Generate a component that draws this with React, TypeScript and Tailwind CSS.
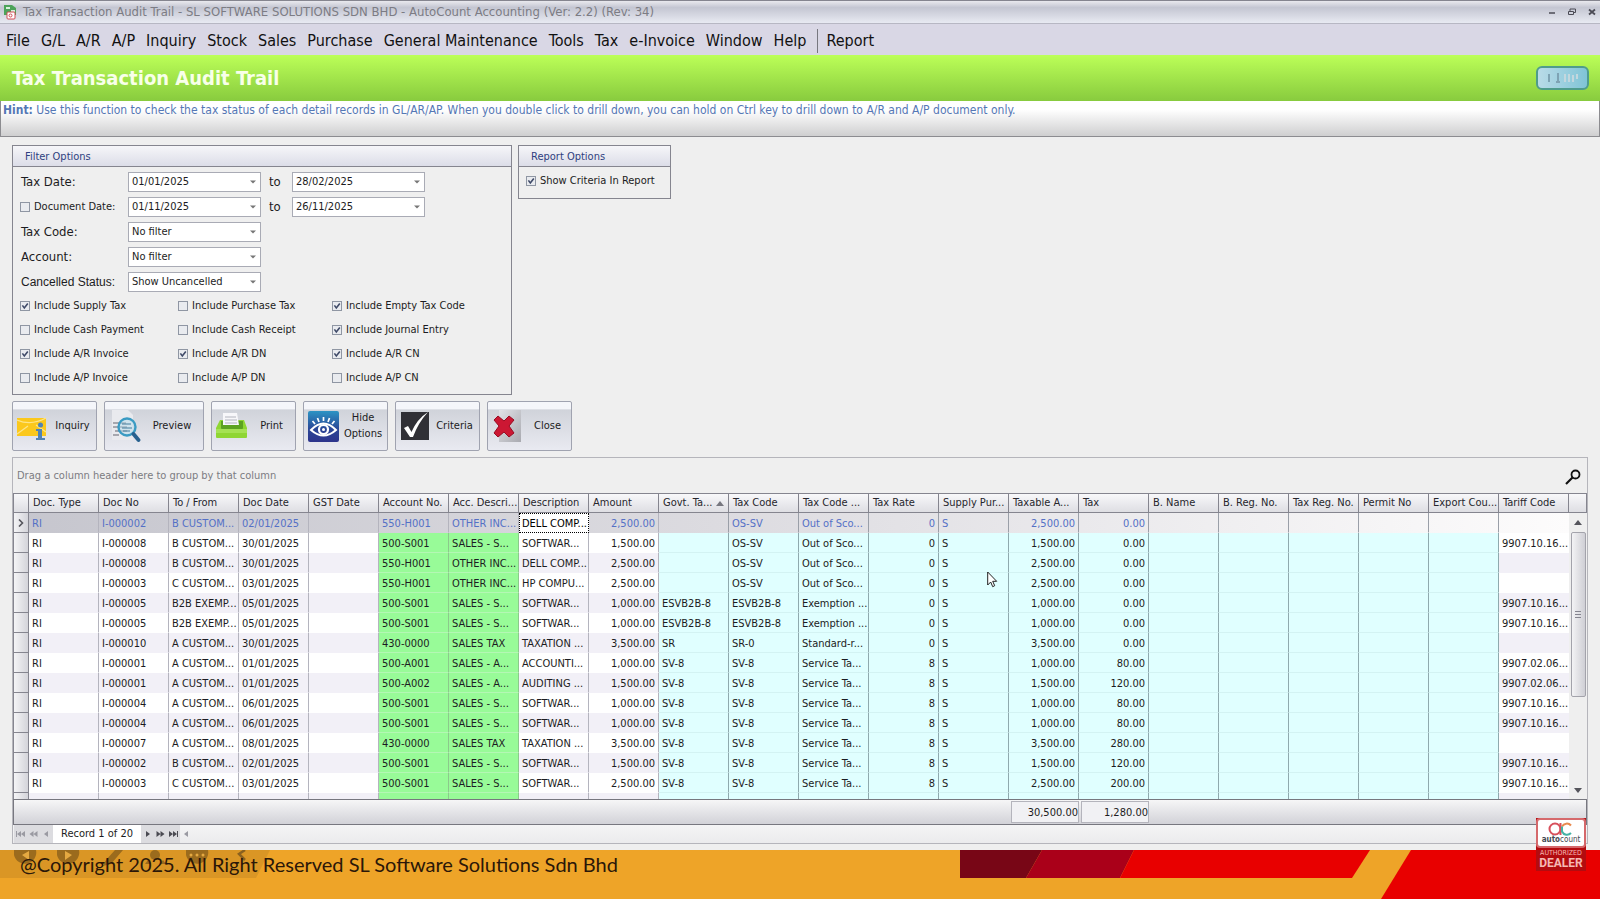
import { FC, ReactNode } from "react";

const menus = ["File", "G/L", "A/R", "A/P", "Inquiry", "Stock", "Sales", "Purchase", "General Maintenance", "Tools", "Tax", "e-Invoice", "Window", "Help"];

const includes: [string, boolean][] = [
    ["Include Supply Tax", true], ["Include Purchase Tax", false], ["Include Empty Tax Code", true],
    ["Include Cash Payment", false], ["Include Cash Receipt", false], ["Include Journal Entry", true],
    ["Include A/R Invoice", true], ["Include A/R DN", true], ["Include A/R CN", true],
    ["Include A/P Invoice", false], ["Include A/P DN", false], ["Include A/P CN", false],
];

const columns = [
    "Doc. Type", "Doc No", "To / From", "Doc Date", "GST Date", "Account No.", "Acc. Descri...", "Description",
    "Amount", "Govt. Ta...", "Tax Code", "Tax Code ...", "Tax Rate", "Supply Pur...", "Taxable A...", "Tax",
    "B. Name", "B. Reg. No.", "Tax Reg. No.", "Permit No", "Export Cou...", "Tariff Code",
];

// doc no, customer, date, account, acc. description, description, amount, govt. tax, tax code, tax code desc., rate, tax, tariff
const records = [
    ["I-000002", "B CUSTOM...", "02/01/2025", "550-H001", "OTHER INC...", "DELL COMP...", "2,500.00", "", "OS-SV", "Out of Sco...", "0", "0.00", ""],
    ["I-000008", "B CUSTOM...", "30/01/2025", "500-S001", "SALES - S...", "SOFTWAR...", "1,500.00", "", "OS-SV", "Out of Sco...", "0", "0.00", "9907.10.16..."],
    ["I-000008", "B CUSTOM...", "30/01/2025", "550-H001", "OTHER INC...", "DELL COMP...", "2,500.00", "", "OS-SV", "Out of Sco...", "0", "0.00", ""],
    ["I-000003", "C CUSTOM...", "03/01/2025", "550-H001", "OTHER INC...", "HP COMPU...", "2,500.00", "", "OS-SV", "Out of Sco...", "0", "0.00", ""],
    ["I-000005", "B2B EXEMP...", "05/01/2025", "500-S001", "SALES - S...", "SOFTWAR...", "1,000.00", "ESVB2B-8", "ESVB2B-8", "Exemption ...", "0", "0.00", "9907.10.16..."],
    ["I-000005", "B2B EXEMP...", "05/01/2025", "500-S001", "SALES - S...", "SOFTWAR...", "1,000.00", "ESVB2B-8", "ESVB2B-8", "Exemption ...", "0", "0.00", "9907.10.16..."],
    ["I-000010", "A CUSTOM...", "30/01/2025", "430-0000", "SALES TAX", "TAXATION ...", "3,500.00", "SR", "SR-0", "Standard-r...", "0", "0.00", ""],
    ["I-000001", "A CUSTOM...", "01/01/2025", "500-A001", "SALES - A...", "ACCOUNTI...", "1,000.00", "SV-8", "SV-8", "Service Ta...", "8", "80.00", "9907.02.06..."],
    ["I-000001", "A CUSTOM...", "01/01/2025", "500-A002", "SALES - A...", "AUDITING ...", "1,500.00", "SV-8", "SV-8", "Service Ta...", "8", "120.00", "9907.02.06..."],
    ["I-000004", "A CUSTOM...", "06/01/2025", "500-S001", "SALES - S...", "SOFTWAR...", "1,000.00", "SV-8", "SV-8", "Service Ta...", "8", "80.00", "9907.10.16..."],
    ["I-000004", "A CUSTOM...", "06/01/2025", "500-S001", "SALES - S...", "SOFTWAR...", "1,000.00", "SV-8", "SV-8", "Service Ta...", "8", "80.00", "9907.10.16..."],
    ["I-000007", "A CUSTOM...", "08/01/2025", "430-0000", "SALES TAX", "TAXATION ...", "3,500.00", "SV-8", "SV-8", "Service Ta...", "8", "280.00", ""],
    ["I-000002", "B CUSTOM...", "02/01/2025", "500-S001", "SALES - S...", "SOFTWAR...", "1,500.00", "SV-8", "SV-8", "Service Ta...", "8", "120.00", "9907.10.16..."],
    ["I-000003", "C CUSTOM...", "03/01/2025", "500-S001", "SALES - S...", "SOFTWAR...", "2,500.00", "SV-8", "SV-8", "Service Ta...", "8", "200.00", "9907.10.16..."],
];

const toCells = (r: string[]) => [
    "RI", r[0], r[1], r[2], "", r[3], r[4], r[5], r[6], r[7], r[8], r[9], r[10], "S", r[6], r[11], "", "", "", "", "", r[12],
];

const isNumber = (c: number) => c === 8 || c === 12 || c === 14 || c === 15;

const Columns: FC = () => (
    <colgroup>
        <col className="w-[15px]" />
        {columns.map((c) => <col key={c} />)}
    </colgroup>
);

const Check: FC<{ label: string; checked?: boolean }> = ({ label, checked }) => (
    <label className="flex h-6 items-center gap-1 whitespace-nowrap">
        <span className="grid shrink-0">
            <input type="checkbox" defaultChecked={checked} className="peer col-start-1 row-start-1 size-[10px] appearance-none border border-[#8f96a3] bg-[#e9ebef]" />
            <svg viewBox="0 0 10 10" className="pointer-events-none invisible col-start-1 row-start-1 size-[10px] peer-checked:visible" fill="none" stroke="#3f4a68" strokeWidth="1.6">
                <path d="M2.4 4.4 4.3 7 7.8 2.4" />
            </svg>
        </span>
        {label}
    </label>
);

const Arrow: FC = () => <svg viewBox="0 0 6 4" className="h-1 w-1.5" fill="#777"><path d="M0 .5h6L3 3.5z" /></svg>;

const DateBox: FC<{ label: string; value: string }> = ({ label, value }) => (
    <div className="flex h-5 w-[133px] items-center border border-[#a9abb5] bg-white pl-[3px]">
        <input aria-label={label} defaultValue={value} className="min-w-0 flex-1 outline-none" />
        <button aria-label={label + " list"} className="px-1"><Arrow /></button>
    </div>
);

const Combo: FC<{ id: string; value: string }> = ({ id, value }) => (
    <div className="grid h-5 w-[133px] items-center border border-[#a9abb5] bg-white">
        <select id={id} className="col-start-1 row-start-1 appearance-none pl-[3px] outline-none">
            <option>{value}</option>
        </select>
        <span className="pointer-events-none col-start-1 row-start-1 justify-self-end px-1"><Arrow /></span>
    </div>
);

const Group: FC<{ title: string; className: string; children: ReactNode }> = ({ title, className, children }) => (
    <section className={"border border-[#85858f] " + className}>
        <h2 className="h-[21px] border-b border-[#85858f] bg-linear-to-b from-[#f6f6f9] to-[#dcdde8] pl-3 leading-[22px] text-[#2f3f80]">{title}</h2>
        {children}
    </section>
);

const ToolButton: FC<{ label: string; wide?: boolean; children: ReactNode }> = ({ label, wide, children }) => (
    <button className={(wide ? "w-[100px]" : "w-[85px]") + " flex h-[50px] items-center rounded-xs border border-[#a0a3b0] bg-linear-to-b from-[#f5f6fa] from-15% via-[#d0d3da] via-16% to-[#e9eaf1] pl-1"}>
        {children}
        <span className="flex-1 text-center leading-4">{label}</span>
    </button>
);

const InquiryIcon: FC = () => (
    <svg viewBox="0 0 32 32" className="size-8">
        <path d="M0 8h29v18H0z" fill="#fbc81c" />
        <path d="M0 10q14 6 29-2M0 24l11-8M29 22l-10-7" stroke="#fde58a" strokeWidth="1.3" fill="none" />
        <circle cx="23.500" cy="15" r="2.500" fill="#4f83b5" />
        <path d="M19 19h6v9h3v2h-9v-2h2v-7h-2z" fill="#4f83b5" />
    </svg>
);

const PreviewIcon: FC = () => (
    <svg viewBox="0 0 32 36" className="h-9 w-8">
        <path d="M3 2h16l5 5v25H3z" fill="#e9eaee" />
        <path d="M4 15h13M4 19h14M6 23h12M4 27h6" stroke="#65656f" strokeWidth="1.200" />
        <circle cx="18" cy="19" r="8.500" fill="#b6dcec" fillOpacity=".5" stroke="#3a9bc3" strokeWidth="2.400" />
        <path d="M13 16h9M13 20h10M14 23h7" stroke="#447c9b" strokeWidth="1.200" />
        <path d="M24.500 26l5 6" stroke="#28618f" strokeWidth="3.800" strokeLinecap="round" />
    </svg>
);

const PrintIcon: FC = () => (
    <svg viewBox="0 0 32 32" className="size-8">
        <path d="M4 10h24l3 8v9q0 1-1 1H1q-1 0-1-1v-9z" fill="#8fd634" />
        <path d="M5 11h22v7q0 1-1 1H6q-1 0-1-1z" fill="#5da321" />
        <path d="M7 3h14l2 12H7z" fill="#f7f7fa" />
        <path d="M9 7h11M9 10h12M9 13h12" stroke="#b3b5be" />
        <path d="M0 19h31v4H0z" fill="#a5e254" />
    </svg>
);

const EyeIcon: FC = () => (
    <svg viewBox="0 0 31 31" className="size-[31px]">
        <defs>
            <linearGradient id="eye" x1="0" y1="0" x2="0" y2="1">
                <stop offset="0" stopColor="#2c94c4" />
                <stop offset=".6" stopColor="#2a4596" />
                <stop offset="1" stopColor="#2d348c" />
            </linearGradient>
        </defs>
        <rect width="31" height="31" rx="2" fill="url(#eye)" />
        <path d="M3 19q12.500-13 25 0q-12.500 11-25 0z" fill="none" stroke="#fff" strokeWidth="2" />
        <circle cx="15.500" cy="18.500" r="4.500" fill="none" stroke="#fff" strokeWidth="2.200" />
        <circle cx="15.500" cy="18.500" r="1.500" fill="#fff" />
        <path d="M15.500 6v4M9.500 7l1.500 4M21.500 7L20 11M4.500 10l2.500 3M26.500 10L24 13" stroke="#fff" strokeWidth="1.700" />
    </svg>
);

const CriteriaIcon: FC = () => (
    <svg viewBox="0 0 30 30" className="size-[30px]">
        <path d="M1 1h28v28H1z" fill="#303036" />
        <path d="M4 17l4-2 3.500 6Q17 8 28 1 18 12 13 26h-3z" fill="#fff" />
    </svg>
);

const CloseIcon: FC = () => (
    <svg viewBox="0 0 32 34" className="h-[34px] w-8">
        <defs>
            <linearGradient id="page" x1="0" y1="0" x2="1" y2="1">
                <stop offset="0" stopColor="#e2e3e8" />
                <stop offset="1" stopColor="#a9aab0" />
            </linearGradient>
        </defs>
        <path d="M7 1h22v32H7z" fill="url(#page)" />
        <path d="M2 11l4-4 6 5 5-5 5 4-5 6 5 7-5 4-5-5-6 5-4-4 5-7z" fill="#cc1733" stroke="#980c22" />
    </svg>
);

// record navigator glyphs
const Nav: FC<{ label: string; d: string; on?: boolean }> = ({ label, d, on }) => (
    <button aria-label={label} className="flex w-[13px] items-center justify-center">
        <svg viewBox="0 0 9 6" className={on ? "h-1.5 w-[9px] fill-[#4a4a52]" : "h-1.5 w-[9px] fill-[#9a9aa2]"}><path d={d} /></svg>
    </button>
);

const Grid: FC = () => (
    <table className="w-full table-fixed border-separate border-spacing-0 leading-4 whitespace-nowrap">
        <Columns />
        <thead>
            <tr className="h-5">
                <th aria-label="Row" className="border-y border-r border-[#85858f] bg-linear-to-b from-[#f8f8fa] to-[#dedee3]" />
                {columns.map((c, i) => (
                    <th key={c} className="border-y border-r border-[#85858f] bg-linear-to-b from-[#f8f8fa] to-[#dedee3] p-0 pl-1 text-left font-normal text-[#26262c]">
                        {i === 9 ? (
                            <span className="flex items-center justify-between pr-1">{c}
                                <svg viewBox="0 0 8 5" className="h-[5px] w-2" fill="#77777f"><path d="M0 5h8L4 0z" /></svg>
                            </span>
                        ) : c}
                    </th>
                ))}
            </tr>
        </thead>
        <tbody>
            {[...records, null].map((r, n) => (
                <tr key={n} className={n === 0 ? "h-5 bg-linear-to-r from-[#c6c6ce] via-[#dcdbe0] via-45% to-[#fdfcfc] text-[#5470c6]" : n % 2 ? "h-5 bg-white" : "h-5 bg-[#f2f0f7]"}>
                    <td className="border-r border-b border-[#85858f] bg-linear-to-r from-[#f4f4f6] to-[#d4d4da] p-0">
                        {n === 0 && (
                            <svg viewBox="0 0 6 8" className="mx-auto h-2 w-1.5" fill="none" stroke="#55555c" strokeWidth="1.600"><path d="M1 .5 4.500 4 1 7.500" /></svg>
                        )}
                    </td>
                    {(r ? toCells(r) : columns.map(() => "")).map((text, c) => {
                        let look = "border-r-[#b4b4be] border-b-transparent";
                        if (n > 0 && (c === 5 || c === 6)) look = "border-r-[#8cc98c] border-b-[#b4f7b4] bg-[#98fb98]";
                        if (c > 8 && c < 21) look = n > 0 ? "border-r-[#8fa9ae] border-b-[#d3f3f3] bg-[#e0ffff]" : "border-r-[#9a9fa8] border-b-transparent";
                        if (n === 0 && c === 7) look = "bg-white text-black outline-1 -outline-offset-1 outline-dotted outline-black border-transparent";
                        if (c === 21) look = "border-transparent";
                        return (
                            <td key={c} className={"border-r border-b p-0 pt-0.5 " + (isNumber(c) ? "pr-[3px] text-right " : "pl-[3px] ") + look}>{text}</td>
                        );
                    })}
                </tr>
            ))}
        </tbody>
    </table>
);

export default function App() {
    return (
        <div className="flex h-screen flex-col overflow-hidden bg-[#efefef] font-['DejaVu_Sans_Condensed','DejaVu_Sans',sans-serif] text-[11px] text-[#1c1c22]">
            <header className="flex h-6 shrink-0 items-center border-t border-b border-t-[#85858f] border-b-[#b7b7c3] bg-linear-to-b from-[#e9e9ee] via-[#c4c6d2] via-30% to-[#e8eaf2] pr-1 pl-[3px]">
                <svg viewBox="0 0 14 16" className="mr-1.5 h-4 w-3.5">
                    <path d="M1 1h8l4 3v7H1z" fill="#4da35a" />
                    <path d="M3 3h4v2H3zM8 6h4v2H8z" fill="#d9f0dc" />
                    <rect x="4" y="8" width="8" height="7" rx="1" fill="#fff" stroke="#d24a55" />
                    <circle cx="7.500" cy="11.500" r="1.500" fill="none" stroke="#d24a55" />
                </svg>
                <span className="flex-1 text-[13px] text-[#7c7c84]">Tax Transaction Audit Trail - SL SOFTWARE SOLUTIONS SDN BHD - AutoCount Accounting (Ver: 2.2) (Rev: 34)</span>
                <div className="flex gap-3">
                    <button aria-label="Minimize"><svg viewBox="0 0 8 8" className="size-2" stroke="#4b4b55" strokeWidth="1.500"><path d="M1 5h6" /></svg></button>
                    <button aria-label="Restore"><svg viewBox="0 0 8 8" className="size-2" fill="none" stroke="#4b4b55"><path d="M.5 3.500h5v3h-5zM2 3V1h5.500v3.500H6" /></svg></button>
                    <button aria-label="Close window"><svg viewBox="0 0 8 8" className="size-2" stroke="#4b4b55" strokeWidth="1.800"><path d="M1 1.500l6 5M7 1.500l-6 5" /></svg></button>
                </div>
            </header>
            <nav className="flex h-[31px] shrink-0 items-center gap-[11px] bg-[#d9d7e5] pt-0.5 pl-1.5 text-[16px] text-[#111]">
                {menus.map((m) => <button key={m}>{m}</button>)}
                <button className="border-l border-[#77777f] pl-2">Report</button>
            </nav>
            <div className="flex h-[46px] shrink-0 items-center justify-between bg-linear-to-b from-[#bcff58] to-[#88cb3e] pr-[11px] pl-3">
                <h1 className="text-[20px] font-bold text-[#f8ffe9]">Tax Transaction Audit Trail</h1>
                <div className="flex h-6 w-[53px] items-center justify-center rounded-md border-2 border-[#4f9c8c] bg-linear-to-r from-[#b9dbe8] to-[#7fc4d6]">
                    <svg viewBox="0 0 34 12" className="h-3 w-[34px]" stroke="#7ea3b4" strokeWidth="2"><path d="M3 2v8M12 1v10M10 10h4" /><path d="M19 2v8M23 2v8M27 3v7M31 2v5" stroke="#c3d7de" /></svg>
                </div>
            </div>
            <div className="h-9 shrink-0 border border-t-0 border-[#8c8c90] bg-linear-to-b from-white from-25% to-[#cfcfd0] pl-0.5 text-[12px] leading-[18px] text-[#5577b5]">
                <b>Hint:</b> Use this function to check the tax status of each detail records in GL/AR/AP. When you double click to drill down, you can hold on Ctrl key to drill down to A/R and A/P document only.
            </div>

            <main className="flex min-h-0 flex-1 flex-col gap-1.5 px-3 pt-2 pb-1.5">
                <div className="flex items-start gap-1.5">
                    <Group title="Filter Options" className="w-[500px] pb-1">
                        <div className="grid grid-cols-[107px_133px_31px_1fr] items-center gap-y-[5px] pt-[5px] pl-2">
                            <span className="text-[13px]">Tax Date:</span>
                            <DateBox label="Tax date from" value="01/01/2025" />
                            <span className="pl-2 text-[13px]">to</span>
                            <DateBox label="Tax date to" value="28/02/2025" />
                            <div className="-ml-px flex h-5 items-center"><Check label="Document Date:" /></div>
                            <DateBox label="Document date from" value="01/11/2025" />
                            <span className="pl-2 text-[13px]">to</span>
                            <DateBox label="Document date to" value="26/11/2025" />
                            <label htmlFor="code" className="text-[13px]">Tax Code:</label>
                            <div className="col-span-3"><Combo id="code" value="No filter" /></div>
                            <label htmlFor="account" className="text-[13px]">Account:</label>
                            <div className="col-span-3"><Combo id="account" value="No filter" /></div>
                            <label htmlFor="status" className="font-['Liberation_Sans',sans-serif] text-[12px] whitespace-nowrap">Cancelled Status:</label>
                            <div className="col-span-3"><Combo id="status" value="Show Uncancelled" /></div>
                        </div>
                        <div className="grid grid-cols-[158px_154px_1fr] pt-0.5 pl-[7px]">
                            {includes.map(([label, on]) => <Check key={label} label={label} checked={on} />)}
                        </div>
                    </Group>
                    <Group title="Report Options" className="w-[153px] pb-[5px]">
                        <div className="pt-0.5 pl-[7px]"><Check label="Show Criteria In Report" checked /></div>
                    </Group>
                </div>

                <div className="flex gap-[7px]">
                    <ToolButton label="Inquiry"><InquiryIcon /></ToolButton>
                    <ToolButton label="Preview" wide><PreviewIcon /></ToolButton>
                    <ToolButton label="Print"><PrintIcon /></ToolButton>
                    <ToolButton label="Hide Options"><EyeIcon /></ToolButton>
                    <ToolButton label="Criteria"><CriteriaIcon /></ToolButton>
                    <ToolButton label="Close"><CloseIcon /></ToolButton>
                </div>

                <section className="relative flex min-h-0 flex-1 flex-col border border-[#b5b5bb]">
                    <div className="flex h-[35px] shrink-0 items-center justify-between pt-0.5 pr-1.5 pl-1 text-[#7c7c82]">
                        Drag a column header here to group by that column
                        <button aria-label="Search">
                            <svg viewBox="0 0 16 16" className="size-4" fill="none" stroke="#111" strokeWidth="1.800"><circle cx="10.500" cy="5.500" r="4" /><path d="M7.500 8.500L1 15" strokeWidth="2.200" /></svg>
                        </button>
                    </div>
                    <div className="flex min-h-0 flex-1">
                        <div className="min-w-0 flex-1 overflow-hidden border-l border-[#85858f]"><Grid /></div>
                        <div className="flex w-[18px] shrink-0 flex-col items-center">
                            <div className="h-5 w-full shrink-0 border border-l-0 border-[#85858f] bg-linear-to-b from-[#f8f8fa] to-[#dedee3]" />
                            <svg viewBox="0 0 8 5" className="my-[7px] h-[5px] w-2 shrink-0" fill="#55555c"><path d="M0 5h8L4 0z" /></svg>
                            <div className="flex min-h-0 w-full flex-1 flex-col items-center">
                                <div className="flex h-[66%] w-[15px] flex-col items-center justify-center gap-0.5 rounded-xs border border-[#a3a3ab] bg-linear-to-r from-[#f3f3f5] to-[#cfcfd5]">
                                    <i className="h-px w-1.5 bg-[#85858f]" /><i className="h-px w-1.5 bg-[#85858f]" /><i className="h-px w-1.5 bg-[#85858f]" />
                                </div>
                            </div>
                            <svg viewBox="0 0 8 5" className="my-1.5 h-[5px] w-2 shrink-0" fill="#55555c"><path d="M0 0h8L4 5z" /></svg>
                        </div>
                    </div>
                    <div className="h-[26px] shrink-0 border border-[#77777f] bg-linear-to-b from-[#f6f6f7] to-[#d2d2d8] pr-[17px]">
                        <table className="w-full table-fixed border-separate border-spacing-0">
                            <Columns />
                            <tbody>
                                <tr className="h-6">
                                    <td colSpan={15} className="p-0" />
                                    <td className="p-0 pl-0.5"><div className="h-[22px] border border-[#b4b4bc] bg-[#f1f1f4] text-right leading-[22px]">30,500.00</div></td>
                                    <td className="p-0 pl-0.5"><div className="h-[22px] border border-[#b4b4bc] bg-[#f1f1f4] text-right leading-[22px]">1,280.00</div></td>
                                    <td colSpan={6} className="p-0" />
                                </tr>
                            </tbody>
                        </table>
                    </div>
                    <div className="flex h-[18px] shrink-0 bg-linear-to-b from-[#f4f4f5] to-[#ebebed] pl-px">
                        <div className="flex bg-[#dcdce0]">
                            <Nav label="First record" d="M0 0h1v6H0zM5 0v6L1 3zM9 0v6L5 3z" />
                            <Nav label="Previous page" d="M4.500 0v6L.5 3zM8.500 0v6l-4-3z" />
                            <Nav label="Previous record" d="M6 0v6L2 3z" />
                        </div>
                        <span className="bg-white px-2 leading-[18px]">Record 1 of 20</span>
                        <div className="flex bg-[#dcdce0]">
                            <Nav on label="Next record" d="M3 0v6l4-3z" />
                            <Nav on label="Next page" d="M.5 0v6l4-3zM4.500 0v6l4-3z" />
                            <Nav on label="Last record" d="M8 0h1v6H8zM0 0v6l4-3zM4 0v6l4-3z" />
                        </div>
                        <Nav label="Scroll left" d="M6 0v6L2 3z" />
                    </div>
                    <svg viewBox="0 0 11 17" className="pointer-events-none absolute top-[113px] left-[974px] h-[17px] w-[11px]" fill="#fff" stroke="#222"><path d="M.7 1v13l3-3 2 4.700 2-1-2-4.400h4z" /></svg>
                </section>
            </main>

            <footer className="relative flex h-[49px] shrink-0 bg-[#eea428]">
                <svg viewBox="0 0 270 28" className="absolute top-0 left-0 h-7 w-[270px]">
                    <path d="M0 0h270l-14 28H0z" fill="#a87420" fillOpacity=".28" />
                    <g fill="#7a5418" fillOpacity=".65">
                        <path d="M14 0h22a11 11 0 0 1-22 5zM57 0h22a11 11 0 0 1-22 5zM186 0h22a11 11 0 0 1-22 5zM106 10l9-10h8l-12 14-8 2z" />
                        <circle cx="155" cy="5" r="5" />
                        <path d="M145 14l3-4 3 4zM160 14l3-4 3 4z" />
                    </g>
                    <g fill="#e5a941">
                        <path d="M29 1v9l-7-5zM65 1v9l7-5z" />
                        <circle cx="191" cy="5" r="1.500" /><circle cx="197" cy="5" r="1.500" /><circle cx="203" cy="5" r="1.500" />
                    </g>
                    <path d="M245 0l-6 4 6 6" fill="none" stroke="#8a611f" strokeWidth="2.500" />
                </svg>
                <p className="relative pl-5 font-['Lato',sans-serif] text-[20px] leading-7 text-[#2b1708]">@Copyright 2025. All Right Reserved SL Software Solutions Sdn Bhd</p>
                <svg viewBox="0 0 640 49" className="absolute top-0 right-0 h-[49px] w-[640px]">
                    <path d="M0 0h82L66 28H0z" fill="#780616" />
                    <path d="M82 0h92l-14 28H66z" fill="#aa0019" />
                    <path d="M174 0h236l-18 28H160z" fill="#e80000" />
                    <path d="M451 0h189v49H421z" fill="#e80000" />
                </svg>
                <div className="absolute right-3.5 bottom-7 w-[50px] bg-[#b30c10] text-center leading-none text-[#f6b9b4]">
                    <div className="flex h-[30px] flex-col items-center rounded-sm border-2 border-[#d5696c] bg-white pt-0.5 text-[#454a52]">
                        <svg viewBox="0 0 26 14" className="h-3.5 w-[26px]" fill="none" strokeWidth="2">
                            <circle cx="7" cy="7" r="5.500" stroke="#d8505c" />
                            <path d="M12.500 1v12" stroke="#d8505c" />
                            <path d="M23 3.500a5.500 5.500 0 0 0-9 1" stroke="#e88a4f" />
                            <path d="M14 4.500v5a5.500 5.500 0 0 0 9 1.500" stroke="#45b3a6" />
                        </svg>
                        <span className="text-[8px]"><b>auto</b>count</span>
                    </div>
                    <div className="pt-0.5 text-[7px]">AUTHORIZED</div>
                    <div className="pb-0.5 font-['Roboto',sans-serif] text-[12px] font-bold">DEALER</div>
                </div>
            </footer>
        </div>
    );
}
